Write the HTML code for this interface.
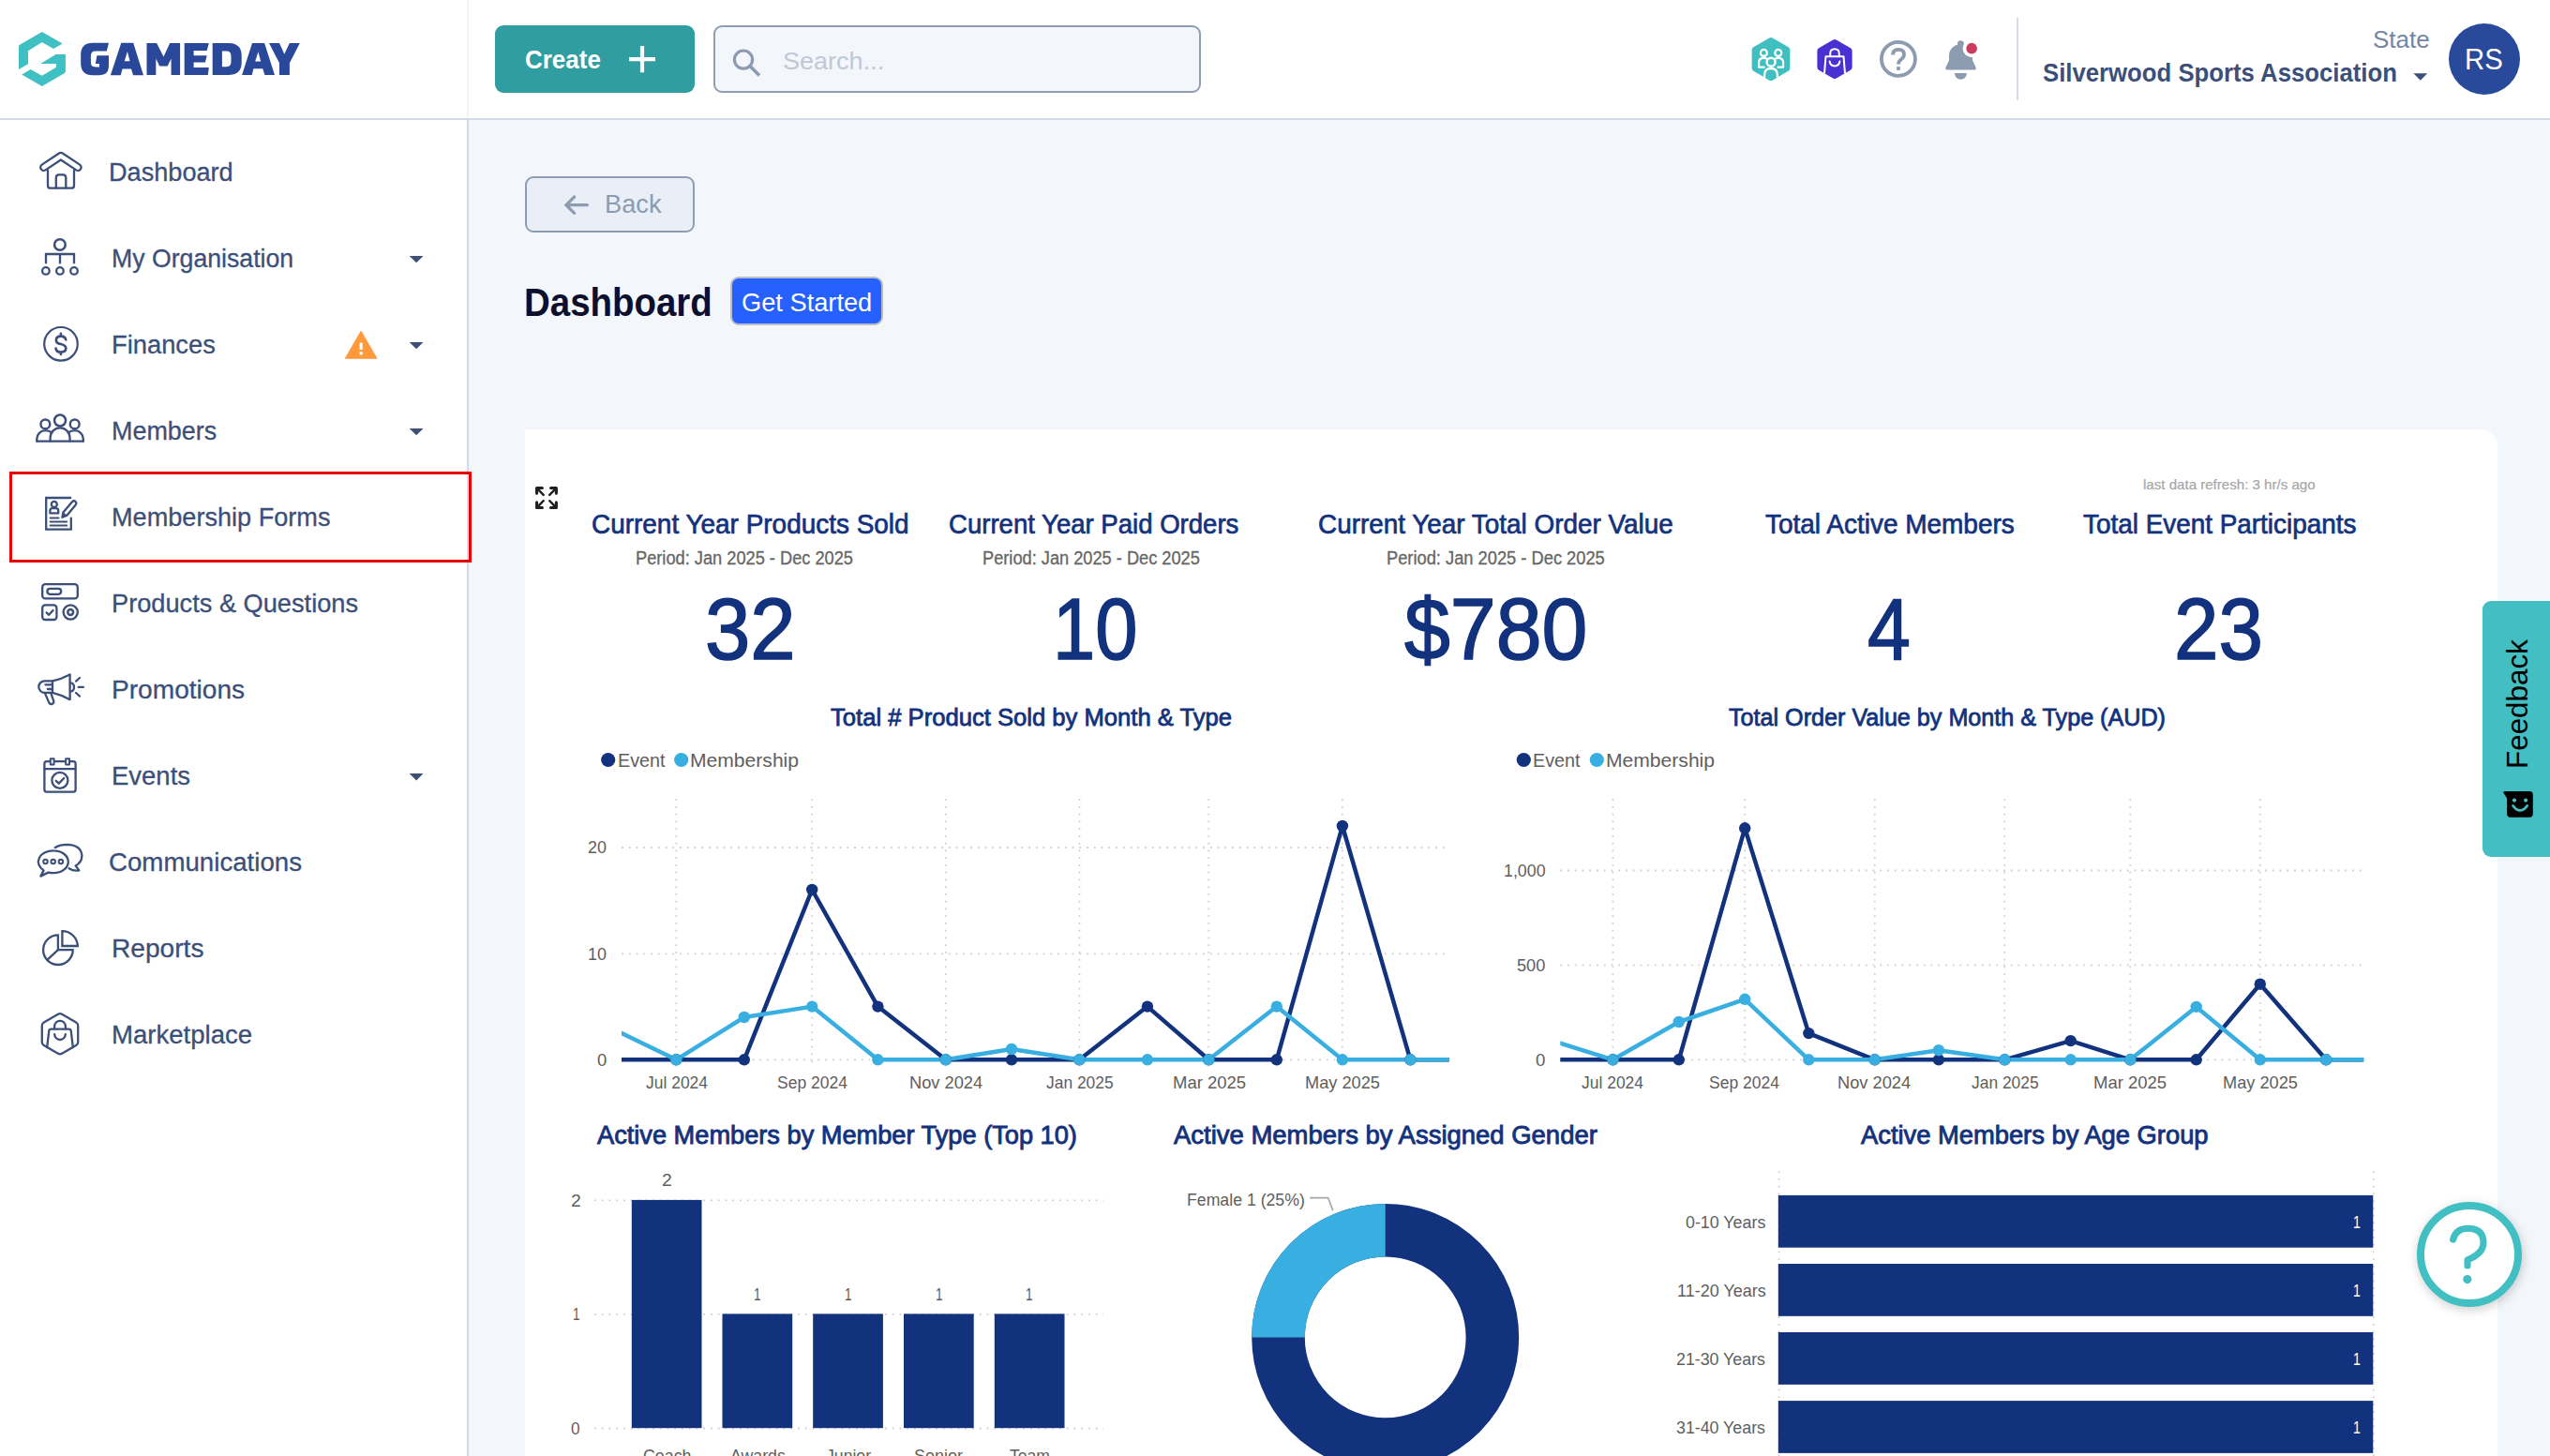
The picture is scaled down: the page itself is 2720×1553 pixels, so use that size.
<!DOCTYPE html>
<html lang="en"><head><meta charset="utf-8"><title>GameDay Dashboard</title>
<style>
*{box-sizing:border-box;margin:0;padding:0}
html,body{width:2720px;height:1553px;overflow:hidden;background:#f3f6fb;font-family:"Liberation Sans",sans-serif}
.abs,.t,svg.ov{position:absolute}
.t{white-space:pre;line-height:1em;height:1em;transform-origin:0 0;display:block}
svg.ov{left:0;top:0;width:2720px;height:1553px;overflow:visible;pointer-events:none}
#header{left:0;top:0;width:2720px;height:126px;background:#fff}
#hline{left:0;top:126px;width:2720px;height:2px;background:#d3dbe6}
#side{left:0;top:128px;width:498px;height:1425px;background:#fff}
#sline{left:498px;top:128px;width:2px;height:1425px;background:#d3dbe6}
#sline2{left:498px;top:0;width:2px;height:126px;background:#f0f3f9}
#create{left:528px;top:27px;width:213px;height:72px;border-radius:9px;background:#309ea0}
#search{left:761px;top:27px;width:520px;height:72px;border-radius:9px;background:#f3f6fb;border:2px solid #8f9db3}
#vdiv{left:2151px;top:19px;width:2px;height:88px;background:#d3dbe6}
#avatar{left:2612px;top:25px;width:76px;height:76px;border-radius:50%;background:#29499b}
#back{left:560px;top:188px;width:181px;height:60px;border-radius:9px;background:#eaeff7;border:2px solid #8f9db3}
#getst{left:779px;top:295px;width:163px;height:52px;border-radius:9px;background:#2660fe;border:2px solid #b9bdc6}
#card{left:560px;top:458px;width:2104px;height:1200px;background:#fff;border-top-right-radius:17px}
#hl{left:10px;top:503px;width:493px;height:97px;border:3px solid #e60000}
#feedback{left:2648px;top:641px;width:90px;height:273px;border-radius:9px;background:#43bfc3}
#fbtxt{left:2670.2px;top:820px;width:140px;height:32px;font-size:31.4px;line-height:32px;color:#000;transform:rotate(-90deg);transform-origin:0 0;white-space:nowrap}
#helpfab{left:2577.9px;top:1281.8px;width:112.3px;height:112.3px;border-radius:50%;background:#fff;border:8.3px solid #41bfc2;box-shadow:1px 3px 12px rgba(0,0,0,.2)}
</style></head>
<body>
<header id="header" class="abs"></header>
<div id="hline" class="abs"></div>
<nav id="side" class="abs"></nav>
<div id="sline" class="abs"></div><div id="sline2" class="abs"></div>
<div id="create" class="abs"></div>
<div id="search" class="abs"></div>
<div id="vdiv" class="abs"></div>
<div id="avatar" class="abs"></div>
<div id="back" class="abs"></div>
<div id="getst" class="abs"></div>
<section id="card" class="abs"></section>
<div id="hl" class="abs"></div>
<svg class="ov" viewBox="0 0 2720 1553">

<g fill="#3fc0c2">
<path d="M44.8 34 L66.7 46.5 L57.1 52.1 L44.8 45.1 L30 54.2 L30 68.3 L20 74.1 L20 49.6 Q20 48.4 21 47.8 Z"/>
<path d="M69.9 58.1 L69.9 76.3 Q69.9 77.5 68.9 78.1 L44.8 92 L23.2 79.5 L32.6 73.9 L44.8 80.8 L60 71.7 L60 68 L43.1 68 L59.6 58.1 Z"/>
</g>
<g fill="#2a4899">
<path d="M116 45.7 L99 45.7 Q86.2 45.7 86.2 58.5 L86.2 67.5 Q86.2 80.2 99 80.2 L106 80.2 Q116 80.2 116 70.5 L116 59.3 L103.4 59.3 L101.9 68 L106 68 L106 71.4 L101.5 71.4 Q96.9 71.4 96.9 66.5 L96.9 59.5 Q96.9 54.5 102 54.5 L113.8 54.5 Z"/>
<path fill-rule="evenodd" d="M117.9 80.2 L129.3 45.7 L142.2 45.7 L153 80.2 L142 80.2 L140 73.6 L130.6 73.6 L128.7 80.2 Z M135.9 55.1 L138.6 65.2 L132.8 65.2 Z"/>
<path d="M156.5 79.9 L156.5 46 L167.1 46 L174.5 60.6 L181.2 46 L192.1 46 L192.1 79.9 L182.6 79.9 L182.6 62.4 L178.7 70.5 L170.2 70.5 L166.35 62.4 L166.35 79.9 Z"/>
<path d="M196.7 46 L222.8 46 L220.7 53.9 L206.6 53.9 L206.6 59.2 L220.7 59.2 L218.9 66.6 L206.6 66.6 L206.6 71.9 L222.8 71.9 L221.8 79.9 L196.7 79.9 Z"/>
<path fill-rule="evenodd" d="M226.7 46 L244 46 Q257.7 46 257.7 59.5 L257.7 66.5 Q257.7 79.9 244 79.9 L226.7 79.9 Z M236.9 54.6 L236.9 71.2 L241.5 71.2 Q246.5 71.2 246.5 66 L246.5 59.8 Q246.5 54.6 241.5 54.6 Z"/>
<path fill-rule="evenodd" d="M258.1 79.9 L269 46 L282.1 46 L293 79.9 L282.4 79.9 L280.3 73.3 L270.4 73.3 L268.7 79.9 Z M275.4 55.3 L278.2 65.4 L272.2 65.4 Z"/>
<path d="M287 46 L298 46 L303.3 57.8 L308.9 46 L319.8 46 L308.9 67.3 L308.9 79.9 L298 79.9 L298 67.3 Z"/>
</g>


<g>
<!-- plus -->
<path d="M671 63.1 H699 M685 49 V77.2" stroke="#fff" stroke-width="4.2" fill="none"/>
<!-- search -->
<circle cx="793" cy="63.6" r="9.6" fill="none" stroke="#8d9bb0" stroke-width="3.2"/>
<path d="M800 70.6 L810 80.6" stroke="#8d9bb0" stroke-width="3.6" fill="none"/>
<!-- teal hex -->
<path d="M1887.27 40.50 Q1889.00 39.50 1890.73 40.50 L1907.62 50.25 Q1909.35 51.25 1909.35 53.25 L1909.35 72.75 Q1909.35 74.75 1907.62 75.75 L1890.73 85.50 Q1889.00 86.50 1887.27 85.50 L1870.38 75.75 Q1868.65 74.75 1868.65 72.75 L1868.65 53.25 Q1868.65 51.25 1870.38 50.25 Z" fill="#40bfc1"/>
<clipPath id="hxc"><path d="M1887.27 40.50 Q1889.00 39.50 1890.73 40.50 L1907.62 50.25 Q1909.35 51.25 1909.35 53.25 L1909.35 72.75 Q1909.35 74.75 1907.62 75.75 L1890.73 85.50 Q1889.00 86.50 1887.27 85.50 L1870.38 75.75 Q1868.65 74.75 1868.65 72.75 L1868.65 53.25 Q1868.65 51.25 1870.38 50.25 Z"/></clipPath>
<g fill="none" stroke="#fff" stroke-width="2.2" stroke-linecap="round" stroke-linejoin="round">
<circle cx="1881.4" cy="56.4" r="3.5"/><circle cx="1896.8" cy="56.4" r="3.5"/>
<path d="M1881.6 71.7 H1876.1 V66.4 Q1876.1 61.8 1881.4 61.8 Q1884 61.8 1885.4 63.2"/>
<path d="M1896.6 71.7 H1902.1 V66.4 Q1902.1 61.8 1896.8 61.8 Q1894.2 61.8 1892.8 63.2"/>
</g>
<circle cx="1889.1" cy="66.2" r="4.5" fill="#40bfc1" stroke="#fff" stroke-width="2.5"/>
<path d="M1882.1 90 V80 Q1882.1 73 1889 73 Q1895.9 73 1895.9 80 V90" fill="#40bfc1" stroke="#fff" stroke-width="2.3" clip-path="url(#hxc)"/>
<!-- purple hex -->
<path d="M1955.27 42.60 Q1957.00 41.60 1958.73 42.60 L1973.89 51.35 Q1975.62 52.35 1975.62 54.35 L1975.62 71.85 Q1975.62 73.85 1973.89 74.85 L1958.73 83.60 Q1957.00 84.60 1955.27 83.60 L1940.11 74.85 Q1938.38 73.85 1938.38 71.85 L1938.38 54.35 Q1938.38 52.35 1940.11 51.35 Z" fill="#4830d3"/>
<g fill="none" stroke="#fff" stroke-width="2" stroke-linejoin="round">
<path d="M1946 78.4 L1947.5 60.2 H1966.5 L1968 78.4"/>
<path d="M1952.2 60.2 V57.4 Q1952.2 52.3 1957 52.3 Q1961.8 52.3 1961.8 57.4 V60.2"/>
<path d="M1951.6 65.4 Q1952.2 70.4 1957 70.4 Q1961.8 70.4 1962.4 65.4" stroke-linecap="round"/>
</g>
<!-- help -->
<circle cx="2024.9" cy="62.9" r="18" fill="none" stroke="#8d9bb0" stroke-width="3.8"/>
<path d="M2019 58.6 Q2019 52.9 2025 52.9 Q2031 52.9 2031 58 Q2031 61 2028 63.2 Q2025 65.4 2025 68.6" fill="none" stroke="#8d9bb0" stroke-width="3.8"/>
<rect x="2023.1" y="71.1" width="3.8" height="3.8" fill="#8d9bb0"/>
<!-- bell -->
<circle cx="2091.4" cy="46.7" r="3.5" fill="#8d9bb0"/>
<path d="M2077.4 74.6 Q2074.4 74.6 2075.5 71.8 L2079 64.2 V59.6 C2079 51.5 2085 47.2 2091.5 47.2 C2098 47.2 2104 51.5 2104 59.6 V64.2 L2107.5 71.8 Q2108.6 74.6 2105.6 74.6 Z" fill="#8d9bb0"/>
<path d="M2084.9 78 H2097.9 Q2097.2 84.7 2091.4 84.7 Q2085.6 84.7 2084.9 78 Z" fill="#8d9bb0"/>
<circle cx="2103.1" cy="51.65" r="9.5" fill="#fff"/><circle cx="2103.1" cy="51.65" r="5.8" fill="#cc3a5c"/>
<!-- caret -->
<path d="M2574.4 78.3 H2589.2 L2581.8 85.7 Z" fill="#3b4f79"/>
</g>


<g fill="none" stroke="#3b4f79" stroke-width="2.3" stroke-linejoin="round" stroke-linecap="round">
<!-- home -->
<path d="M46.6 178.5 L64.9 166.4 L83.2 178.5" stroke-width="9.1"/>
<path d="M46.6 178.5 L64.9 166.4 L83.2 178.5" stroke="#fff" stroke-width="4.6"/>
<path d="M51 181.6 V197.9 Q51 200.7 53.8 200.7 H76.2 Q79 200.7 79 197.9 V181.6"/>
<path d="M59.8 200.7 V189.6 Q59.8 186.4 63 186.4 H67.1 Q70.3 186.4 70.3 189.6 V200.7"/>
<!-- org -->
<circle cx="63.9" cy="261" r="5.85" stroke-width="2.5"/>
<path d="M64 272 V281.2 M49 281.2 V271 H79 V281.2" stroke-linecap="butt" stroke-linejoin="miter"/>
<circle cx="48.9" cy="288.9" r="3.8"/><circle cx="63.95" cy="288.9" r="3.8"/><circle cx="79" cy="288.9" r="3.8"/>
<!-- finances -->
<circle cx="65" cy="366.8" r="17.8" stroke-width="2.2"/>
<path d="M70.2 362.4 Q69.6 358.7 64.9 358.7 Q59.9 358.7 59.9 362.9 Q59.9 366 64.9 367 Q70.3 368.2 70.3 371.6 Q70.3 375.6 64.9 375.6 Q60 375.6 59.6 371.6 M64.9 355.8 V358.7 M64.9 375.6 V378" stroke-width="2.7"/>
<!-- members -->
<circle cx="64.05" cy="448.5" r="6" stroke-width="2.5"/>
<circle cx="48.35" cy="452.4" r="4.9" stroke-width="2.4"/><circle cx="79.7" cy="452.4" r="4.9" stroke-width="2.4"/>
<path d="M53.6 470.7 V466.8 A10.45 10.45 0 0 1 74.5 466.8 V470.7"/>
<path d="M39.3 470.7 V468.3 A9.05 9.05 0 0 1 48.35 459.2 Q52.6 459.2 55.4 461.6"/>
<path d="M88.8 470.7 V468.3 A9.05 9.05 0 0 0 79.7 459.2 Q75.5 459.2 72.7 461.6"/>
<path d="M39.3 470.7 H88.8"/>
<!-- membership forms -->
<path d="M75.2 531 H49.2 V564.7 H75.8 V552.6" stroke-linejoin="miter"/>
<circle cx="57.8" cy="537.9" r="3" />
<path d="M53.4 547.4 V544.8 Q53.4 542.2 56 542.2 H59.6 Q62.2 542.2 62.2 544.8 V547.4 Z"/>
<path d="M53.6 552.4 H62.6 M53.6 556.6 H71.2 M53.6 560.6 H71.2" stroke-width="2"/>
<path d="M66.4 551.8 L67.4 546.4 L77.2 535 Q78.9 533.5 80.6 535 Q82 536.6 80.7 538.4 L71.4 549.8 Z"/>
<path d="M66.6 551.6 L67.5 546.8 L71.2 549.7 Z" fill="#3b4f79" stroke-width="1"/>
<!-- products -->
<rect x="45.2" y="623.2" width="37.6" height="15.2" rx="3"/>
<rect x="50.4" y="627.9" width="14.8" height="5.9" rx="2.95"/>
<rect x="45.2" y="645.4" width="15.2" height="15.6" rx="3"/>
<path d="M49.6 653.4 L52.2 655.8 L56.6 651"/>
<circle cx="75.2" cy="653" r="7.6"/><circle cx="75.2" cy="653" r="2.9" stroke-width="2.5"/>
<!-- promotions -->
<path d="M74.6 719.4 V746.2 Q65 741 56 738.9 H47.6 A6.3 6.3 0 0 1 47.6 726.3 H56 Q65 724.4 74.6 719.4 Z"/>
<path d="M56 726.3 V738.9 M48.4 730.3 H55.2 M50.8 735 H55.2"/>
<path d="M48 739.6 L52.4 749.6 Q53.6 751.6 55.8 750.8 Q57.8 749.8 57.2 747.6 L54.4 739.6"/>
<path d="M75.2 728.4 Q79 728.8 79 733 Q79 737.2 75.2 737.6"/>
<path d="M81 726.6 L85 723 M83.6 732.8 H89 M81 739 L85 742.6" stroke-width="2.2"/>
<!-- events -->
<rect x="47.4" y="812.2" width="33.2" height="32.4" rx="2.4"/>
<path d="M47.4 820.2 H80.6"/>
<rect x="53.8" y="809.2" width="3.8" height="6.2" fill="#fff" stroke-width="2"/><rect x="70.2" y="809.2" width="3.8" height="6.2" fill="#fff" stroke-width="2"/>
<circle cx="63.9" cy="832.4" r="8.5"/>
<path d="M59.8 832.8 L62.8 835.6 L68.2 830"/>
<!-- communications -->
<path d="M58.8 904 Q64.2 900.9 71.4 900.9 Q87 901.4 87.4 913.2 Q87.2 919.6 80.6 923.4 L84.4 928.4 Q78 929.2 73.6 926.2"/>
<path d="M57.2 907.3 A15.6 11.9 0 0 1 57.2 931.1 Q54 931.1 51.4 930.6 L43.4 934.6 L46.6 928.4 A15.6 11.9 0 0 1 57.2 907.3 Z" fill="#fff"/>
<circle cx="48.5" cy="919" r="2.25" stroke-width="2"/><circle cx="56.7" cy="919" r="2.25" stroke-width="2"/><circle cx="64.9" cy="919" r="2.25" stroke-width="2"/>
<!-- reports -->
<path d="M61.9 997.4 A15.8 15.8 0 1 0 77.7 1013.2 H61.9 Z" stroke-linejoin="miter"/>
<path d="M61.9 1013.2 L50.6 1023.6"/>
<path d="M66.4 993.2 A16.4 16.4 0 0 1 82.8 1009 H66.4 Z" stroke-linejoin="miter"/>
<!-- marketplace -->
<path d="M61.92 1081.80 Q64.00 1080.60 66.08 1081.80 L81.15 1090.50 Q83.23 1091.70 83.23 1094.10 L83.23 1111.50 Q83.23 1113.90 81.15 1115.10 L66.08 1123.80 Q64.00 1125.00 61.92 1123.80 L46.85 1115.10 Q44.77 1113.90 44.77 1111.50 L44.77 1094.10 Q44.77 1091.70 46.85 1090.50 Z"/>
<path d="M50.2 1117.2 L52.2 1099.9 Q52.5 1097.7 54.7 1097.7 H73.3 Q75.5 1097.7 75.8 1099.9 L77.8 1117.2"/>
<path d="M58.1 1097.5 V1094.7 A5.9 5.9 0 0 1 69.9 1094.7 V1097.5"/>
<path d="M58.2 1103.2 A5.8 5.8 0 0 0 69.8 1103.2"/>
</g>
<path d="M385.1 353.2 L401.9 382.2 H368.3 Z" fill="#ff9a3c" stroke="#ff9a3c" stroke-width="1" stroke-linejoin="round"/>
<rect x="383.6" y="365.6" width="3.1" height="7.4" fill="#fff"/><rect x="383.6" y="375.2" width="3.1" height="3.2" fill="#fff"/>
<path d="M436.7 272.9 H451.5 L444.1 280.2 Z" fill="#3b4f79"/><path d="M436.7 364.9 H451.5 L444.1 372.2 Z" fill="#3b4f79"/><path d="M436.7 457.0 H451.5 L444.1 464.3 Z" fill="#3b4f79"/><path d="M436.7 825.1 H451.5 L444.1 832.4000000000001 Z" fill="#3b4f79"/>


<path d="M626.4 218.7 H605 M612.6 210 L603.9 218.7 L612.6 227.4" fill="none" stroke="#8d9bb0" stroke-width="3.2" stroke-linecap="round" stroke-linejoin="miter"/>
<g fill="none" stroke="#202020" stroke-linecap="round" stroke-linejoin="round"><path d="M578.35 520.55 H572.55 V526.20 M587.55 520.55 H593.35 V526.20 M578.35 541.55 H572.55 V535.90 M587.55 541.55 H593.35 V535.90" stroke-width="3.1"/><path d="M573.15 521.15 L579.70 527.90 M592.75 521.15 L586.20 527.90 M573.15 540.95 L579.70 534.20 M592.75 540.95 L586.20 534.20" stroke-width="2.4"/><path d="M572.55 520.55 L575.75 520.55 L572.55 523.75 Z M593.35 520.55 L590.15 520.55 L593.35 523.75 Z M572.55 541.55 L575.75 541.55 L572.55 538.35 Z M593.35 541.55 L590.15 541.55 L593.35 538.35 Z" fill="#202020" stroke-width="1"/></g>

<path d="M663.1 904.0 H1546.0" stroke="#d0cfce" stroke-width="1.8" stroke-dasharray="1.8 5.95" fill="none"/>
<path d="M663.1 1017.4 H1546.0" stroke="#d0cfce" stroke-width="1.8" stroke-dasharray="1.8 5.95" fill="none"/>
<path d="M663.1 1130.3 H1546.0" stroke="#d0cfce" stroke-width="1.8" stroke-dasharray="1.8 5.95" fill="none"/>
<path d="M721.3 852.2 V1138.6" stroke="#d0cfce" stroke-width="1.8" stroke-dasharray="1.8 5.95" fill="none"/>
<path d="M866.2312 852.2 V1138.6" stroke="#d0cfce" stroke-width="1.8" stroke-dasharray="1.8 5.95" fill="none"/>
<path d="M1008.8248 852.2 V1138.6" stroke="#d0cfce" stroke-width="1.8" stroke-dasharray="1.8 5.95" fill="none"/>
<path d="M1151.4184 852.2 V1138.6" stroke="#d0cfce" stroke-width="1.8" stroke-dasharray="1.8 5.95" fill="none"/>
<path d="M1289.3368 852.2 V1138.6" stroke="#d0cfce" stroke-width="1.8" stroke-dasharray="1.8 5.95" fill="none"/>
<path d="M1431.9304 852.2 V1138.6" stroke="#d0cfce" stroke-width="1.8" stroke-dasharray="1.8 5.95" fill="none"/>
<clipPath id="cl1"><rect x="663.1" y="840" width="882.9" height="310"/></clipPath>
<g clip-path="url(#cl1)">
<polyline points="651.2,1130.3 721.3,1130.3 793.8,1130.3 866.2,949.0 936.4,1073.6 1008.8,1130.3 1079.0,1130.3 1151.4,1130.3 1223.9,1073.6 1289.3,1130.3 1361.8,1130.3 1431.9,881.0 1504.4,1130.3 1574.5,1130.3" fill="none" stroke="#13327d" stroke-width="4.5" stroke-linejoin="round"/>
<polyline points="651.2,1096.3 721.3,1130.3 793.8,1085.0 866.2,1073.6 936.4,1130.3 1008.8,1130.3 1079.0,1119.0 1151.4,1130.3 1223.9,1130.3 1289.3,1130.3 1361.8,1073.6 1431.9,1130.3 1504.4,1130.3 1574.5,1130.3" fill="none" stroke="#38afe0" stroke-width="4.5" stroke-linejoin="round"/>
</g>
<circle cx="721.3" cy="1130.3" r="6.2" fill="#13327d"/>
<circle cx="793.8" cy="1130.3" r="6.2" fill="#13327d"/>
<circle cx="866.2" cy="949.0" r="6.2" fill="#13327d"/>
<circle cx="936.4" cy="1073.6" r="6.2" fill="#13327d"/>
<circle cx="1008.8" cy="1130.3" r="6.2" fill="#13327d"/>
<circle cx="1079.0" cy="1130.3" r="6.2" fill="#13327d"/>
<circle cx="1151.4" cy="1130.3" r="6.2" fill="#13327d"/>
<circle cx="1223.9" cy="1073.6" r="6.2" fill="#13327d"/>
<circle cx="1289.3" cy="1130.3" r="6.2" fill="#13327d"/>
<circle cx="1361.8" cy="1130.3" r="6.2" fill="#13327d"/>
<circle cx="1431.9" cy="881.0" r="6.2" fill="#13327d"/>
<circle cx="1504.4" cy="1130.3" r="6.2" fill="#13327d"/>
<circle cx="721.3" cy="1130.3" r="6.2" fill="#38afe0"/>
<circle cx="793.8" cy="1085.0" r="6.2" fill="#38afe0"/>
<circle cx="866.2" cy="1073.6" r="6.2" fill="#38afe0"/>
<circle cx="936.4" cy="1130.3" r="6.2" fill="#38afe0"/>
<circle cx="1008.8" cy="1130.3" r="6.2" fill="#38afe0"/>
<circle cx="1079.0" cy="1119.0" r="6.2" fill="#38afe0"/>
<circle cx="1151.4" cy="1130.3" r="6.2" fill="#38afe0"/>
<circle cx="1223.9" cy="1130.3" r="6.2" fill="#38afe0"/>
<circle cx="1289.3" cy="1130.3" r="6.2" fill="#38afe0"/>
<circle cx="1361.8" cy="1073.6" r="6.2" fill="#38afe0"/>
<circle cx="1431.9" cy="1130.3" r="6.2" fill="#38afe0"/>
<circle cx="1504.4" cy="1130.3" r="6.2" fill="#38afe0"/>
<path d="M1664.3 928.5 H2521.2" stroke="#d0cfce" stroke-width="1.8" stroke-dasharray="1.8 5.95" fill="none"/>
<path d="M1664.3 1029.4 H2521.2" stroke="#d0cfce" stroke-width="1.8" stroke-dasharray="1.8 5.95" fill="none"/>
<path d="M1664.3 1130.3 H2521.2" stroke="#d0cfce" stroke-width="1.8" stroke-dasharray="1.8 5.95" fill="none"/>
<path d="M1720.4 852.2 V1138.6" stroke="#d0cfce" stroke-width="1.8" stroke-dasharray="1.8 5.95" fill="none"/>
<path d="M1861.202 852.2 V1138.6" stroke="#d0cfce" stroke-width="1.8" stroke-dasharray="1.8 5.95" fill="none"/>
<path d="M1999.7330000000002 852.2 V1138.6" stroke="#d0cfce" stroke-width="1.8" stroke-dasharray="1.8 5.95" fill="none"/>
<path d="M2138.264 852.2 V1138.6" stroke="#d0cfce" stroke-width="1.8" stroke-dasharray="1.8 5.95" fill="none"/>
<path d="M2272.253 852.2 V1138.6" stroke="#d0cfce" stroke-width="1.8" stroke-dasharray="1.8 5.95" fill="none"/>
<path d="M2410.784 852.2 V1138.6" stroke="#d0cfce" stroke-width="1.8" stroke-dasharray="1.8 5.95" fill="none"/>
<clipPath id="cl2"><rect x="1664.3" y="840" width="856.8999999999999" height="310"/></clipPath>
<g clip-path="url(#cl2)">
<polyline points="1652.3,1130.3 1720.4,1130.3 1790.8,1130.3 1861.2,883.3 1929.3,1102.1 1999.7,1130.3 2067.9,1130.3 2138.3,1130.3 2208.7,1110.1 2272.3,1130.3 2342.7,1130.3 2410.8,1049.7 2481.2,1130.3 2549.3,1130.3" fill="none" stroke="#13327d" stroke-width="4.5" stroke-linejoin="round"/>
<polyline points="1652.3,1108.9 1720.4,1130.3 1790.8,1090.0 1861.2,1065.8 1929.3,1130.3 1999.7,1130.3 2067.9,1120.2 2138.3,1130.3 2208.7,1130.3 2272.3,1130.3 2342.7,1073.9 2410.8,1130.3 2481.2,1130.3 2549.3,1130.3" fill="none" stroke="#38afe0" stroke-width="4.5" stroke-linejoin="round"/>
</g>
<circle cx="1720.4" cy="1130.3" r="6.2" fill="#13327d"/>
<circle cx="1790.8" cy="1130.3" r="6.2" fill="#13327d"/>
<circle cx="1861.2" cy="883.3" r="6.2" fill="#13327d"/>
<circle cx="1929.3" cy="1102.1" r="6.2" fill="#13327d"/>
<circle cx="1999.7" cy="1130.3" r="6.2" fill="#13327d"/>
<circle cx="2067.9" cy="1130.3" r="6.2" fill="#13327d"/>
<circle cx="2138.3" cy="1130.3" r="6.2" fill="#13327d"/>
<circle cx="2208.7" cy="1110.1" r="6.2" fill="#13327d"/>
<circle cx="2272.3" cy="1130.3" r="6.2" fill="#13327d"/>
<circle cx="2342.7" cy="1130.3" r="6.2" fill="#13327d"/>
<circle cx="2410.8" cy="1049.7" r="6.2" fill="#13327d"/>
<circle cx="2481.2" cy="1130.3" r="6.2" fill="#13327d"/>
<circle cx="1720.4" cy="1130.3" r="6.2" fill="#38afe0"/>
<circle cx="1790.8" cy="1090.0" r="6.2" fill="#38afe0"/>
<circle cx="1861.2" cy="1065.8" r="6.2" fill="#38afe0"/>
<circle cx="1929.3" cy="1130.3" r="6.2" fill="#38afe0"/>
<circle cx="1999.7" cy="1130.3" r="6.2" fill="#38afe0"/>
<circle cx="2067.9" cy="1120.2" r="6.2" fill="#38afe0"/>
<circle cx="2138.3" cy="1130.3" r="6.2" fill="#38afe0"/>
<circle cx="2208.7" cy="1130.3" r="6.2" fill="#38afe0"/>
<circle cx="2272.3" cy="1130.3" r="6.2" fill="#38afe0"/>
<circle cx="2342.7" cy="1073.9" r="6.2" fill="#38afe0"/>
<circle cx="2410.8" cy="1130.3" r="6.2" fill="#38afe0"/>
<circle cx="2481.2" cy="1130.3" r="6.2" fill="#38afe0"/>

<circle cx="648.7" cy="810.5" r="7.6" fill="#13327d"/><circle cx="726.7" cy="810.5" r="7.6" fill="#38afe0"/>
<circle cx="1625.3" cy="810.5" r="7.6" fill="#13327d"/><circle cx="1703.3" cy="810.5" r="7.6" fill="#38afe0"/>

<path d="M634 1280.4 H1177" stroke="#d0cfce" stroke-width="1.8" stroke-dasharray="1.8 5.95" fill="none"/>
<path d="M634 1401.9 H1177" stroke="#d0cfce" stroke-width="1.8" stroke-dasharray="1.8 5.95" fill="none"/>
<path d="M634 1523.5 H1177" stroke="#d0cfce" stroke-width="1.8" stroke-dasharray="1.8 5.95" fill="none"/>
<rect x="673.8" y="1279.9" width="74.7" height="243.3" fill="#13327d"/>
<rect x="770.5" y="1401.4" width="74.7" height="121.8" fill="#13327d"/>
<rect x="867.2" y="1401.4" width="74.7" height="121.8" fill="#13327d"/>
<rect x="964.0" y="1401.4" width="74.7" height="121.8" fill="#13327d"/>
<rect x="1060.8" y="1401.4" width="74.7" height="121.8" fill="#13327d"/>

<circle cx="1477.7" cy="1426.4" r="114.2" fill="none" stroke="#13327d" stroke-width="56.599999999999994"/>
<path d="M1477.7 1283.9 A142.5 142.5 0 0 0 1335.2 1426.4 L1391.8 1426.4 A85.9 85.9 0 0 1 1477.7 1340.5 Z" fill="#38afe0"/>
<path d="M1397.3 1277.6 H1416.7 L1421.9 1291.4" fill="none" stroke="#a6a6a6" stroke-width="1.6"/>

<path d="M1897.6 1249.2 V1553" stroke="#d0cfce" stroke-width="1.8" stroke-dasharray="1.8 5.95" fill="none"/>
<path d="M2531.7 1249.2 V1553" stroke="#d0cfce" stroke-width="1.8" stroke-dasharray="1.8 5.95" fill="none"/>
<rect x="1896.8" y="1274.9" width="634.5" height="55.8" fill="#13327d"/>
<rect x="1896.8" y="1348.0" width="634.5" height="55.8" fill="#13327d"/>
<rect x="1896.8" y="1421.0" width="634.5" height="55.8" fill="#13327d"/>
<rect x="1896.8" y="1494.1" width="634.5" height="55.8" fill="#13327d"/>
</svg>
<span class="t" style="left:559.63px;top:51.36px;font-size:26.74px;transform:scaleX(0.9716);color:#fff;font-weight:700">Create</span>
<span class="t" style="left:834.78px;top:51.88px;font-size:26.60px;transform:scaleX(1.0165);color:#c0c8d6">Search...</span>
<span class="t" style="left:2531.18px;top:30.24px;font-size:25.58px;transform:scaleX(1.0155);color:#7585a5">State</span>
<span class="t" style="left:2178.87px;top:64.39px;font-size:27.76px;transform:scaleX(0.9272);color:#3b4f79;font-weight:700">Silverwood Sports Association</span>
<span class="t" style="left:2629.44px;top:47.75px;font-size:31.83px;transform:scaleX(0.9200);color:#fff">RS</span>
<span class="t" style="left:115.75px;top:169.79px;font-size:27.76px;transform:scaleX(0.9773);color:#3b4f79;-webkit-text-stroke:0.3px #3b4f79">Dashboard</span>
<span class="t" style="left:119.08px;top:261.79px;font-size:27.76px;transform:scaleX(0.9608);color:#3b4f79;-webkit-text-stroke:0.3px #3b4f79">My Organisation</span>
<span class="t" style="left:119.03px;top:353.79px;font-size:27.76px;transform:scaleX(0.9845);color:#3b4f79;-webkit-text-stroke:0.3px #3b4f79">Finances</span>
<span class="t" style="left:119.06px;top:445.79px;font-size:27.76px;transform:scaleX(0.9708);color:#3b4f79;-webkit-text-stroke:0.3px #3b4f79">Members</span>
<span class="t" style="left:119.05px;top:537.79px;font-size:27.76px;transform:scaleX(0.9767);color:#3b4f79;-webkit-text-stroke:0.3px #3b4f79">Membership Forms</span>
<span class="t" style="left:119.04px;top:629.79px;font-size:27.76px;transform:scaleX(0.9801);color:#3b4f79;-webkit-text-stroke:0.3px #3b4f79">Products &amp; Questions</span>
<span class="t" style="left:118.97px;top:721.79px;font-size:27.76px;transform:scaleX(1.0130);color:#3b4f79;-webkit-text-stroke:0.3px #3b4f79">Promotions</span>
<span class="t" style="left:119.02px;top:813.79px;font-size:27.76px;transform:scaleX(0.9902);color:#3b4f79;-webkit-text-stroke:0.3px #3b4f79">Events</span>
<span class="t" style="left:116.40px;top:905.79px;font-size:27.76px;transform:scaleX(0.9971);color:#3b4f79;-webkit-text-stroke:0.3px #3b4f79">Communications</span>
<span class="t" style="left:118.97px;top:997.79px;font-size:27.76px;transform:scaleX(1.0138);color:#3b4f79;-webkit-text-stroke:0.3px #3b4f79">Reports</span>
<span class="t" style="left:119.01px;top:1089.79px;font-size:27.76px;transform:scaleX(0.9932);color:#3b4f79;-webkit-text-stroke:0.3px #3b4f79">Marketplace</span>
<span class="t" style="left:645.21px;top:203.76px;font-size:27.33px;transform:scaleX(0.9966);color:#8d9bb0">Back</span>
<span class="t" style="left:559.26px;top:301.61px;font-size:42.15px;transform:scaleX(0.9121);color:#0c0f2e;font-weight:700">Dashboard</span>
<span class="t" style="left:791.38px;top:309.56px;font-size:26.74px;transform:scaleX(1.0187);color:#fff">Get Started</span>
<span class="t" style="left:631.23px;top:544.53px;font-size:28.78px;transform:scaleX(0.9714);color:#13327d;-webkit-text-stroke:0.7px #13327d">Current Year Products Sold</span>
<span class="t" style="left:1011.64px;top:544.53px;font-size:28.78px;transform:scaleX(0.9579);color:#13327d;-webkit-text-stroke:0.7px #13327d">Current Year Paid Orders</span>
<span class="t" style="left:1405.53px;top:544.53px;font-size:28.78px;transform:scaleX(0.9694);color:#13327d;-webkit-text-stroke:0.7px #13327d">Current Year Total Order Value</span>
<span class="t" style="left:1882.90px;top:544.53px;font-size:28.78px;transform:scaleX(0.9722);color:#13327d;-webkit-text-stroke:0.7px #13327d">Total Active Members</span>
<span class="t" style="left:2222.20px;top:544.53px;font-size:28.78px;transform:scaleX(0.9693);color:#13327d;-webkit-text-stroke:0.7px #13327d">Total Event Participants</span>
<span class="t" style="left:677.56px;top:586.23px;font-size:19.33px;transform:scaleX(0.9429);color:#666666;-webkit-text-stroke:0.3px #666666">Period: Jan 2025 - Dec 2025</span>
<span class="t" style="left:1047.56px;top:586.23px;font-size:19.33px;transform:scaleX(0.9424);color:#666666;-webkit-text-stroke:0.3px #666666">Period: Jan 2025 - Dec 2025</span>
<span class="t" style="left:1479.35px;top:586.23px;font-size:19.33px;transform:scaleX(0.9461);color:#666666;-webkit-text-stroke:0.3px #666666">Period: Jan 2025 - Dec 2025</span>
<span class="t" style="left:751.78px;top:624.58px;font-size:92.50px;transform:scaleX(0.9385);color:#13327d;-webkit-text-stroke:1.6px #13327d">32</span>
<span class="t" style="left:1123.23px;top:624.58px;font-size:92.50px;transform:scaleX(0.8777);color:#13327d;-webkit-text-stroke:1.6px #13327d">10</span>
<span class="t" style="left:1498.40px;top:624.58px;font-size:92.50px;transform:scaleX(0.9493);color:#13327d;-webkit-text-stroke:1.6px #13327d">$780</span>
<span class="t" style="left:1992.31px;top:624.58px;font-size:92.50px;transform:scaleX(0.8918);color:#13327d;-webkit-text-stroke:1.6px #13327d">4</span>
<span class="t" style="left:2319.31px;top:624.58px;font-size:92.50px;transform:scaleX(0.9219);color:#13327d;-webkit-text-stroke:1.6px #13327d">23</span>
<span class="t" style="left:2286.27px;top:510.24px;font-size:14.60px;transform:scaleX(1.0335);color:#a6a6a6;-webkit-text-stroke:0.2px #a6a6a6">last data refresh: 3 hr/s ago</span>
<span class="t" style="left:885.50px;top:752.84px;font-size:25.58px;transform:scaleX(1.0012);color:#13327d;-webkit-text-stroke:0.8px #13327d">Total # Product Sold by Month &amp; Type</span>
<span class="t" style="left:1843.50px;top:752.84px;font-size:25.58px;transform:scaleX(0.9833);color:#13327d;-webkit-text-stroke:0.8px #13327d">Total Order Value by Month &amp; Type (AUD)</span>
<span class="t" style="left:636.60px;top:1197.37px;font-size:27.91px;transform:scaleX(0.9746);color:#13327d;-webkit-text-stroke:0.9px #13327d">Active Members by Member Type (Top 10)</span>
<span class="t" style="left:1252.00px;top:1197.17px;font-size:27.91px;transform:scaleX(0.9841);color:#13327d;-webkit-text-stroke:0.9px #13327d">Active Members by Assigned Gender</span>
<span class="t" style="left:1984.80px;top:1197.37px;font-size:27.91px;transform:scaleX(0.9791);color:#13327d;-webkit-text-stroke:0.9px #13327d">Active Members by Age Group</span>
<span class="t" style="left:658.83px;top:801.22px;font-size:20.06px;transform:scaleX(0.9857);color:#605e5c">Event</span>
<span class="t" style="left:735.90px;top:801.22px;font-size:20.06px;transform:scaleX(1.0519);color:#605e5c">Membership</span>
<span class="t" style="left:1635.43px;top:801.22px;font-size:20.06px;transform:scaleX(0.9857);color:#605e5c">Event</span>
<span class="t" style="left:1712.50px;top:801.22px;font-size:20.06px;transform:scaleX(1.0519);color:#605e5c">Membership</span>
<span class="t" style="left:627.41px;top:895.24px;font-size:18.02px;transform:scaleX(0.9947);color:#605e5c">20</span>
<span class="t" style="left:627.41px;top:1009.04px;font-size:18.02px;transform:scaleX(0.9947);color:#605e5c">10</span>
<span class="t" style="left:637.18px;top:1121.84px;font-size:18.02px;transform:scaleX(1.0222);color:#605e5c">0</span>
<span class="t" style="left:1604.01px;top:919.54px;font-size:18.02px;transform:scaleX(0.9886);color:#605e5c">1,000</span>
<span class="t" style="left:1618.19px;top:1020.74px;font-size:18.02px;transform:scaleX(1.0103);color:#605e5c">500</span>
<span class="t" style="left:1638.17px;top:1121.84px;font-size:18.02px;transform:scaleX(1.0333);color:#605e5c">0</span>
<span class="t" style="left:688.65px;top:1146.04px;font-size:18.02px;transform:scaleX(0.9691);color:#605e5c">Jul 2024</span>
<span class="t" style="left:828.63px;top:1146.04px;font-size:18.02px;transform:scaleX(0.9711);color:#605e5c">Sep 2024</span>
<span class="t" style="left:969.59px;top:1146.04px;font-size:18.02px;transform:scaleX(1.0132);color:#605e5c">Nov 2024</span>
<span class="t" style="left:1116.45px;top:1146.04px;font-size:18.02px;transform:scaleX(0.9658);color:#605e5c">Jan 2025</span>
<span class="t" style="left:1250.57px;top:1146.04px;font-size:18.02px;transform:scaleX(1.0270);color:#605e5c">Mar 2025</span>
<span class="t" style="left:1392.29px;top:1146.04px;font-size:18.02px;transform:scaleX(1.0104);color:#605e5c">May 2025</span>
<span class="t" style="left:1687.45px;top:1146.04px;font-size:18.02px;transform:scaleX(0.9691);color:#605e5c">Jul 2024</span>
<span class="t" style="left:1823.33px;top:1146.04px;font-size:18.02px;transform:scaleX(0.9711);color:#605e5c">Sep 2024</span>
<span class="t" style="left:1960.19px;top:1146.04px;font-size:18.02px;transform:scaleX(1.0132);color:#605e5c">Nov 2024</span>
<span class="t" style="left:2103.05px;top:1146.04px;font-size:18.02px;transform:scaleX(0.9658);color:#605e5c">Jan 2025</span>
<span class="t" style="left:2233.27px;top:1146.04px;font-size:18.02px;transform:scaleX(1.0270);color:#605e5c">Mar 2025</span>
<span class="t" style="left:2370.89px;top:1146.04px;font-size:18.02px;transform:scaleX(1.0104);color:#605e5c">May 2025</span>
<span class="t" style="left:609.32px;top:1271.94px;font-size:18.02px;transform:scaleX(1.0750);color:#605e5c">2</span>
<span class="t" style="left:610.75px;top:1393.14px;font-size:18.02px;transform:scaleX(0.7500);color:#605e5c">1</span>
<span class="t" style="left:609.44px;top:1515.34px;font-size:18.02px;transform:scaleX(0.9556);color:#605e5c">0</span>
<span class="t" style="left:706.02px;top:1250.44px;font-size:18.02px;transform:scaleX(1.0750);color:#605e5c">2</span>
<span class="t" style="left:804.35px;top:1372.14px;font-size:18.02px;transform:scaleX(0.7500);color:#605e5c">1</span>
<span class="t" style="left:900.85px;top:1372.14px;font-size:18.02px;transform:scaleX(0.7500);color:#605e5c">1</span>
<span class="t" style="left:997.75px;top:1372.14px;font-size:18.02px;transform:scaleX(0.7500);color:#605e5c">1</span>
<span class="t" style="left:1094.45px;top:1372.14px;font-size:18.02px;transform:scaleX(0.7500);color:#605e5c">1</span>
<span class="t" style="left:685.51px;top:1544.24px;font-size:18.02px;transform:scaleX(0.9880);color:#605e5c">Coach</span>
<span class="t" style="left:778.90px;top:1544.24px;font-size:18.02px;transform:scaleX(0.9831);color:#605e5c">Awards</span>
<span class="t" style="left:880.60px;top:1544.24px;font-size:18.02px;transform:scaleX(0.9796);color:#605e5c">Junior</span>
<span class="t" style="left:975.00px;top:1544.24px;font-size:18.02px;transform:scaleX(1.0000);color:#605e5c">Senior</span>
<span class="t" style="left:1077.20px;top:1544.24px;font-size:18.02px;transform:scaleX(0.9767);color:#605e5c">Team</span>
<span class="t" style="left:1266.42px;top:1270.84px;font-size:18.02px;transform:scaleX(0.9817);color:#605e5c">Female 1 (25%)</span>
<span class="t" style="left:1797.81px;top:1295.34px;font-size:18.02px;transform:scaleX(0.9906);color:#605e5c">0-10 Years</span>
<span class="t" style="left:2509.51px;top:1295.34px;font-size:18.02px;transform:scaleX(0.7875);color:#fff">1</span>
<span class="t" style="left:1789.00px;top:1368.39px;font-size:18.02px;transform:scaleX(1.0000);color:#605e5c">11-20 Years</span>
<span class="t" style="left:2509.51px;top:1368.39px;font-size:18.02px;transform:scaleX(0.7875);color:#fff">1</span>
<span class="t" style="left:1788.21px;top:1441.44px;font-size:18.02px;transform:scaleX(0.9874);color:#605e5c">21-30 Years</span>
<span class="t" style="left:2509.51px;top:1441.44px;font-size:18.02px;transform:scaleX(0.7875);color:#fff">1</span>
<span class="t" style="left:1788.21px;top:1514.49px;font-size:18.02px;transform:scaleX(0.9874);color:#605e5c">31-40 Years</span>
<span class="t" style="left:2509.51px;top:1514.49px;font-size:18.02px;transform:scaleX(0.7875);color:#fff">1</span>
<div id="feedback" class="abs"></div>
<div id="fbtxt" class="abs">Feedback</div>
<div id="helpfab" class="abs"></div>
<svg class="ov" viewBox="0 0 2720 1553">
<path d="M2672 843.9 H2698.2 Q2701.8 843.9 2701.8 847.5 V868.1 Q2701.8 871.7 2698.2 871.7 H2677.7 Q2674.1 871.7 2674.1 868.1 V851.4 L2670.3 845.6 Q2669.6 843.9 2672 843.9 Z" fill="#000"/>
<circle cx="2682" cy="853.6" r="2.1" fill="#43bfc3"/><circle cx="2694.1" cy="853.6" r="2.1" fill="#43bfc3"/>
<path d="M2680.5 859.4 Q2688.1 869.6 2695.7 859.4" fill="none" stroke="#43bfc3" stroke-width="2.6" stroke-linecap="round"/>
<path d="M2616.6 1322.1 Q2619.5 1310.2 2632.5 1310.2 Q2649 1310.2 2649 1325.5 Q2649 1337 2632 1343.8 V1350" fill="none" stroke="#41bfc2" stroke-width="7.1" stroke-linecap="round" stroke-linejoin="round"/>
<circle cx="2631.8" cy="1364.6" r="4.6" fill="#41bfc2"/>
</svg>
</body></html>
